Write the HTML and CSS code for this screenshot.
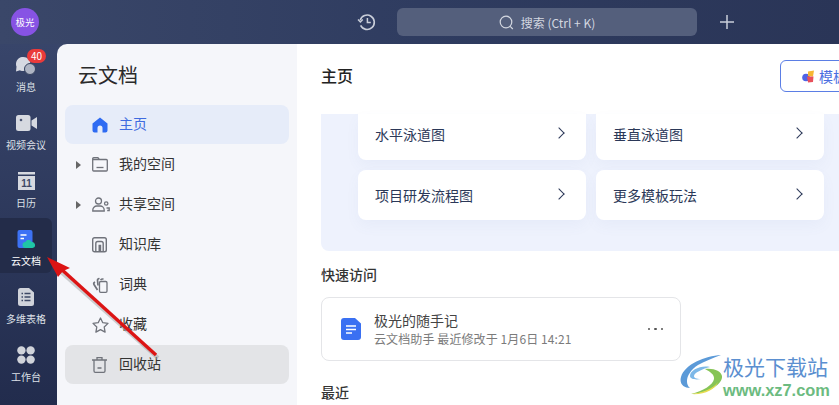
FILE: index.html
```html
<!DOCTYPE html>
<html lang="zh-CN">
<head>
    <meta charset="UTF-8">
    <meta name="viewport" content="width=device-width, initial-scale=1.0">
    <title>云文档</title>
    <link rel="stylesheet" href="styles.css">
</head>
<body>
    <div class="app">
        <header class="topbar">
            <div class="avatar">极光</div>
            <svg class="history" width="20" height="20" viewBox="0 0 20 20" fill="none" stroke="#c9ced9" stroke-width="1.6">
                <path d="M3.2 8.2A7.2 7.2 0 1 1 3.6 13.4"/>
                <path d="M1 7.6l2.4 2.4 2.4-2.4" stroke-width="1.4"/>
                <path d="M10.4 6v4.6h3.4" stroke-width="1.5"/>
            </svg>
            <div class="search">
                <svg width="15" height="15" viewBox="0 0 15 15" fill="none" stroke="#d3d7e0" stroke-width="1.2">
                    <circle cx="7" cy="7" r="5.8"/>
                    <path d="M11.2 11.4l2.6 2.6"/>
                </svg>
                <span>搜索 (Ctrl + K)</span>
            </div>
            <svg class="plus" width="14" height="14" viewBox="0 0 14 14" stroke="#c9ced9" stroke-width="1.5">
                <path d="M7 0v14M0 7h14"/>
            </svg>
        </header>

        <div class="body-row">
            <nav class="sidebar">
                <a class="side-item">
                    <span class="side-icon">
                        <svg width="20" height="19" viewBox="0 0 20 19">
                            <path d="M7 1a7 7 0 0 0-6.500 9.600L0 15.500l4-1.200A7 7 0 0 0 7 15Z" fill="#d6d9e2"/>
                            <circle cx="7.500" cy="8" r="7" fill="#d6d9e2"/>
                            <circle cx="14" cy="13" r="5.500" fill="#aeb4c3" stroke="#35415f" stroke-width="1"/>
                        </svg>
                        <b class="badge">40</b>
                    </span>
                    <span>消息</span>
                </a>
                <a class="side-item">
                    <span class="side-icon">
                        <svg width="21" height="16" viewBox="0 0 21 16">
                            <rect x="0" y="0" width="14.500" height="16" rx="2.500" fill="#d6d9e0"/>
                            <path d="M15.500 5.500L21 2v12l-5.500-3.500Z" fill="#d6d9e0"/>
                            <circle cx="5" cy="5" r="1.300" fill="#4a5573"/>
                        </svg>
                    </span>
                    <span>视频会议</span>
                </a>
                <a class="side-item">
                    <span class="side-icon">
                        <svg width="17" height="18" viewBox="0 0 17 18">
                            <rect width="17" height="2.500" fill="#d6d9e0"/>
                            <rect y="4" width="17" height="14" fill="#d6d9e0"/>
                            <text x="8.500" y="15" text-anchor="middle" class="cal-num">11</text>
                        </svg>
                    </span>
                    <span>日历</span>
                </a>
                <a class="side-item active">
                    <span class="side-icon">
                        <svg width="19" height="19" viewBox="0 0 19 19">
                            <rect x="0.500" width="15" height="18" rx="2" fill="#3d72f5"/>
                            <path d="M3.500 5h6M3.500 8.500h3.500" stroke="#fff" stroke-width="1.500"/>
                            <path d="M8.500 18a3 3 0 0 1 0-6c.8-2.400 5-2.600 6 0a3 3 0 0 1 1 6Z" fill="#1fc6a6"/>
                        </svg>
                    </span>
                    <span>云文档</span>
                </a>
                <a class="side-item">
                    <span class="side-icon">
                        <svg width="16" height="18" viewBox="0 0 16 18">
                            <path d="M2.500 0H11l5 4.500V15.500A2.500 2.500 0 0 1 13.500 18h-11A2.500 2.500 0 0 1 0 15.500v-13A2.500 2.500 0 0 1 2.500 0Z" fill="#d0d3da"/>
                            <path d="M3.500 5.500h1.500M3.500 9h1.500M3.500 12.500h1.500M6.500 5.500h6M6.500 9h6M6.500 12.500h6" stroke="#3d4865" stroke-width="1.600"/>
                        </svg>
                    </span>
                    <span>多维表格</span>
                </a>
                <a class="side-item">
                    <span class="side-icon">
                        <svg width="18" height="18" viewBox="0 0 18 18" fill="#d0d3da">
                            <circle cx="4.400" cy="4.400" r="4.200"/>
                            <circle cx="13.600" cy="4.400" r="4.200"/>
                            <circle cx="4.400" cy="13.600" r="4.200"/>
                            <circle cx="13.600" cy="13.600" r="4.200"/>
                        </svg>
                    </span>
                    <span>工作台</span>
                </a>
            </nav>

            <aside class="panel">
                <h2 class="panel-title">云文档</h2>
                <ul class="tree">
                    <li class="tree-item selected">
                        <svg width="16" height="16" viewBox="0 0 16 16">
                            <path d="M8 0.500L15.500 6.500V13.500A2 2 0 0 1 13.500 15.500H10.500V11A2.500 2.500 0 0 0 5.500 11V15.500H2.500A2 2 0 0 1 0.500 13.500V6.500Z" fill="#2f6bf2"/>
                        </svg>
                        <span>主页</span>
                    </li>
                    <li class="tree-item">
                        <i class="caret"></i>
                        <svg width="16" height="15" viewBox="0 0 16 15" fill="none" stroke="#70737b" stroke-width="1.300">
                            <path d="M.7 2.500V13a1 1 0 0 0 1 1h12.600a1 1 0 0 0 1-1V3.500a1 1 0 0 0-1-1H.7V1.700a1 1 0 0 1 1-1h4.200l1.500 1.800"/>
                            <path d="M4.500 10.500h7"/>
                        </svg>
                        <span>我的空间</span>
                    </li>
                    <li class="tree-item">
                        <i class="caret"></i>
                        <svg width="18" height="15" viewBox="0 0 18 15" fill="none" stroke="#70737b" stroke-width="1.300">
                            <circle cx="6.500" cy="4" r="3"/>
                            <path d="M.8 14v-1a4 4 0 0 1 4-4h3.400a4 4 0 0 1 4 4v1Z"/>
                            <circle cx="14.200" cy="6.500" r="1.700"/>
                            <path d="M14.500 11h2.700v2.500h-2"/>
                        </svg>
                        <span>共享空间</span>
                    </li>
                    <li class="tree-item">
                        <svg width="15" height="16" viewBox="0 0 15 16" fill="none" stroke="#70737b" stroke-width="1.400">
                            <path d="M.7 13V2.500A1.800 1.800 0 0 1 2.500.7h10a1.800 1.800 0 0 1 1.800 1.800V13a1.800 1.800 0 0 1-1.800 1.800H2.500A1.800 1.800 0 0 1 .7 13Z"/>
                            <path d="M3.800 14.500V6.500a2 2 0 0 1 2-2h3.400a2 2 0 0 1 2 2v8M7.200 14.500V8.500h1.300v6"/>
                        </svg>
                        <span>知识库</span>
                    </li>
                    <li class="tree-item">
                        <svg width="16" height="16" viewBox="0 0 16 16" fill="none" stroke="#70737b" stroke-width="1.300">
                            <rect x="7.500" y="4.500" width="7.500" height="10.800" rx="1.200"/>
                            <path d="M5.500 13L2 7.500c-.5-1 0-2 1-2.500M6 8.500L5.500 3c0-1 1-1.500 2-1.200M8.500 3c1-1 2-1.200 3-.8" stroke-width="1.700"/>
                        </svg>
                        <span>词典</span>
                    </li>
                    <li class="tree-item">
                        <svg width="17" height="16" viewBox="0 0 17 16" fill="none" stroke="#70737b" stroke-width="1.300" stroke-linejoin="round">
                            <path d="M8.500 1l2.300 4.700 5.200.7-3.800 3.600.9 5.100-4.600-2.500-4.600 2.500.9-5.100L1 6.400l5.200-.7Z"/>
                        </svg>
                        <span>收藏</span>
                    </li>
                    <li class="tree-item hovered">
                        <svg width="15" height="16" viewBox="0 0 15 16" fill="none" stroke="#70737b" stroke-width="1.300">
                            <path d="M0 3h15M5 3V.7h5V3M2 3v11a1.300 1.300 0 0 0 1.300 1.300h8.400A1.300 1.300 0 0 0 13 14V3M5.500 11h4"/>
                        </svg>
                        <span>回收站</span>
                    </li>
                </ul>
            </aside>

            <main class="main">
                <div class="main-head">
                    <h1>主页</h1>
                    <button class="tpl-btn">
                        <svg width="13" height="13" viewBox="0 0 13 13">
                            <circle cx="4" cy="7.500" r="3.800" fill="#4f63e6"/>
                            <path d="M6 1.500L12 .5 11 6.500 6 6Z" fill="#f7b733"/>
                            <path d="M5 6.500h6.500L11 12 6 12.500Z" fill="#e8505b"/>
                        </svg>
                        <span>模板</span>
                    </button>
                </div>

                <section class="banner">
                    <div class="tpl-grid">
                        <div class="tpl-card cut"><span>水平泳道图</span><i class="chev"></i></div>
                        <div class="tpl-card cut"><span>垂直泳道图</span><i class="chev"></i></div>
                        <div class="tpl-card"><span>项目研发流程图</span><i class="chev"></i></div>
                        <div class="tpl-card"><span>更多模板玩法</span><i class="chev"></i></div>
                    </div>
                </section>

                <h3 class="sec-title">快速访问</h3>
                <div class="quick-card">
                    <svg width="20" height="22" viewBox="0 0 20 22">
                        <path d="M3 0H14L20 5.500V19A3 3 0 0 1 17 22H3A3 3 0 0 1 0 19V3A3 3 0 0 1 3 0Z" fill="#3a70f2"/>
                        <path d="M5 8h10M5 11.500h10M5 15h6" stroke="#fff" stroke-width="1.400"/>
                    </svg>
                    <div class="quick-text">
                        <div class="quick-name">极光的随手记</div>
                        <div class="quick-sub">云文档助手 最近修改于 1月6日 14:21</div>
                    </div>
                    <div class="dots"><i></i><i></i><i></i></div>
                </div>
                <h3 class="sec-title recent">最近</h3>
            </main>
        </div>

        <!-- red annotation arrow drawn over the screenshot -->
        <svg class="arrow" width="839" height="405" viewBox="0 0 839 405">
            <path d="M60 270L157 356" stroke="#9a9a9a" stroke-width="4" opacity=".45" transform="translate(1 2)"/>
            <path d="M60 268L156 355" stroke="#dc1414" stroke-width="3.400"/>
            <path d="M47 257L70 268 63 271 58 277Z" fill="#dc1414"/>
        </svg>

        <div class="watermark">
            <svg class="wm-logo" width="43" height="40" viewBox="0 0 43 40" fill="none">
                <path d="M41 0C25 1 5 9 1 22c-2 7 3 11 9 11C4 28 7 17 18 10 25 6 33 3 41 0Z" fill="#5b9ad8"/>
                <path d="M30 12c-9-2-20 3-20 9 0 3 5 4 11 3-5 0-7-1-7-3 0-3 8-7 16-9Z" fill="#7cb8e8"/>
                <path d="M25 14c9-1 16 2 17 7 1 8-13 17-31 18 12-3 22-9 23-15 .5-4-3-7-9-10Z" fill="#86c456"/>
                <path d="M11 39c11-1 22-5 27-12-3 8-14 13-27 12Z" fill="#e6dc4e"/>
            </svg>
            <div class="wm-text">
                <div class="wm-name">极光下载站</div>
                <div class="wm-url">www.xz7.com</div>
            </div>
        </div>
    </div>
</body>
</html>
```

FILE: styles.css
```css
* {
    box-sizing: border-box;
}
html, body {
    margin: 0;
    height: 100%;
    overflow: hidden;
}
body {
    font-family: "Noto Sans CJK SC", "Liberation Sans", sans-serif;
    color: #333;
}
.app {
    position: relative;
    width: 839px;
    height: 405px;
    overflow: hidden;
    display: flex;
    flex-direction: column;
    background: #39466a;
}

/* top bar */
.topbar {
    height: 44px;
    flex: none;
    display: flex;
    align-items: center;
    padding-left: 11px;
    background: linear-gradient(90deg, #3a4769 0%, #2f3c60 50%, #2a3557 100%);
}
.avatar {
    width: 28px;
    height: 28px;
    border-radius: 50%;
    background: #8753e4;
    color: #fff;
    font-size: 9.5px;
    line-height: 28px;
    text-align: center;
}
.history {
    margin-left: 318px;
}
.search {
    width: 300px;
    height: 28px;
    margin-left: 20px;
    border-radius: 6px;
    background: #545f7c;
    color: #d3d7e0;
    font-size: 12px;
    display: flex;
    align-items: center;
    justify-content: center;
    gap: 7px;
}
.plus {
    margin-left: 23px;
}

.body-row {
    flex: 1;
    min-height: 0;
    display: flex;
}

/* left icon rail */
.sidebar {
    width: 57px;
    flex: none;
    display: flex;
    flex-direction: column;
    gap: 3px;
    background: linear-gradient(180deg, #38456a 0%, #222c4d 100%);
}
.side-item {
    width: 52px;
    height: 55px;
    flex: none;
    border-radius: 0 6px 6px 0;
    display: flex;
    flex-direction: column;
    align-items: center;
    padding-top: 11px;
    color: #dde0e7;
    font-size: 10px;
    line-height: 14px;
}
.side-item.active {
    background: #232c49;
    color: #fff;
}
.side-icon {
    position: relative;
    height: 20px;
    margin-bottom: 5px;
    display: flex;
    align-items: center;
    justify-content: center;
}
.badge {
    position: absolute;
    left: 11px;
    top: -6px;
    height: 14px;
    min-width: 19px;
    padding: 0 3px;
    border-radius: 7px;
    background: #ea3a3a;
    color: #fff;
    font-size: 10px;
    font-weight: 400;
    line-height: 14px;
    text-align: center;
}
.cal-num {
    font-family: "Liberation Sans", sans-serif;
    font-size: 10px;
    font-weight: 700;
    fill: #3d4865;
}

/* document tree panel */
.panel {
    width: 240px;
    flex: none;
    border-radius: 10px 0 0 0;
    background: #f5f6fa;
    padding: 0 8px;
}
.panel-title {
    margin: 17px 0 16px 13px;
    font-size: 20px;
    font-weight: 400;
    line-height: 28px;
    color: #2a2a2a;
}
.tree {
    list-style: none;
    margin: 0;
    padding: 0;
    display: flex;
    flex-direction: column;
    gap: 1px;
}
.tree-item {
    position: relative;
    height: 39px;
    border-radius: 8px;
    padding-left: 27px;
    display: flex;
    align-items: center;
    font-size: 14px;
    color: #333;
}
.tree-item svg {
    flex: none;
}
.tree-item span {
    position: absolute;
    left: 54px;
    top: 8px;
    line-height: 20px;
}
.tree-item.selected {
    background: #e6ecf9;
    color: #3f6be0;
}
.tree-item.hovered {
    background: #e3e4e7;
}
.caret {
    position: absolute;
    left: 11px;
    top: 16px;
    border-left: 5px solid #666;
    border-top: 4px solid transparent;
    border-bottom: 4px solid transparent;
}

/* main column */
.main {
    flex: 1;
    min-width: 0;
    overflow: hidden;
    background: #fff;
    padding-left: 24px;
}
.main-head {
    height: 70px;
    display: flex;
    align-items: center;
    justify-content: space-between;
    width: 560px;
}
.main-head h1 {
    margin: 0 0 8px;
    font-size: 16px;
    font-weight: 500;
    color: #222;
}
.tpl-btn {
    width: 100px;
    height: 32px;
    flex: none;
    margin: 0 1px 6px 0;
    border: 1px solid #5b7ee5;
    border-radius: 6px;
    background: #fff;
    padding: 0 0 0 21px;
    display: flex;
    align-items: center;
    gap: 4px;
    font-family: inherit;
    font-size: 14px;
    color: #4a6ee0;
}
.banner {
    width: 560px;
    height: 137px;
    border-radius: 0 0 8px 8px;
    background: #eef2fd;
    padding-left: 37px;
}
.tpl-grid {
    width: 466px;
    display: grid;
    grid-template-columns: 228px 228px;
    grid-template-rows: 46px 50px;
    gap: 10px;
}
.tpl-card {
    background: #fff;
    border-radius: 8px;
    padding: 0 23px 0 17px;
    display: flex;
    align-items: center;
    justify-content: space-between;
    font-size: 14px;
    color: #2b3858;
    box-shadow: 0 6px 14px rgba(90, 110, 170, 0.05);
}
.tpl-card.cut {
    border-radius: 0 0 8px 8px;
    padding-bottom: 6px;
}
.chev {
    width: 8px;
    height: 8px;
    margin-bottom: 2px;
    border-top: 1.8px solid #2b3858;
    border-right: 1.8px solid #2b3858;
    transform: rotate(45deg);
}
.sec-title {
    margin: 13px 0 13px;
    font-size: 14px;
    font-weight: 500;
    line-height: 20px;
    color: #333;
}
.sec-title.recent {
    margin-top: 21px;
}
.quick-card {
    width: 360px;
    height: 64px;
    border: 1px solid #e4e5e8;
    border-radius: 8px;
    padding-left: 19px;
    display: flex;
    align-items: center;
}
.quick-text {
    margin-left: 13px;
    flex: 1;
}
.quick-name {
    font-size: 14px;
    line-height: 20px;
    color: #444;
}
.quick-sub {
    font-size: 12px;
    line-height: 18px;
    letter-spacing: 0.1px;
    color: #7b7b7b;
}
.dots {
    display: flex;
    gap: 4px;
    margin-right: 17px;
}
.dots i {
    width: 2.500px;
    height: 2.500px;
    border-radius: 50%;
    background: #555;
}

/* overlays that sit on top of the screenshot */
.arrow {
    position: absolute;
    left: 0;
    top: 0;
    pointer-events: none;
}
.watermark {
    position: absolute;
    left: 680px;
    top: 354px;
    display: flex;
}
.wm-logo {
    margin-top: 1px;
}
.wm-name {
    font-size: 21px;
    line-height: 24px;
    color: #5b8fd0;
}
.wm-url {
    margin-top: 4px;
    font-family: "Liberation Sans", sans-serif;
    font-size: 16.400px;
    font-weight: 700;
    line-height: 16px;
    color: #6cbb80;
}
```
